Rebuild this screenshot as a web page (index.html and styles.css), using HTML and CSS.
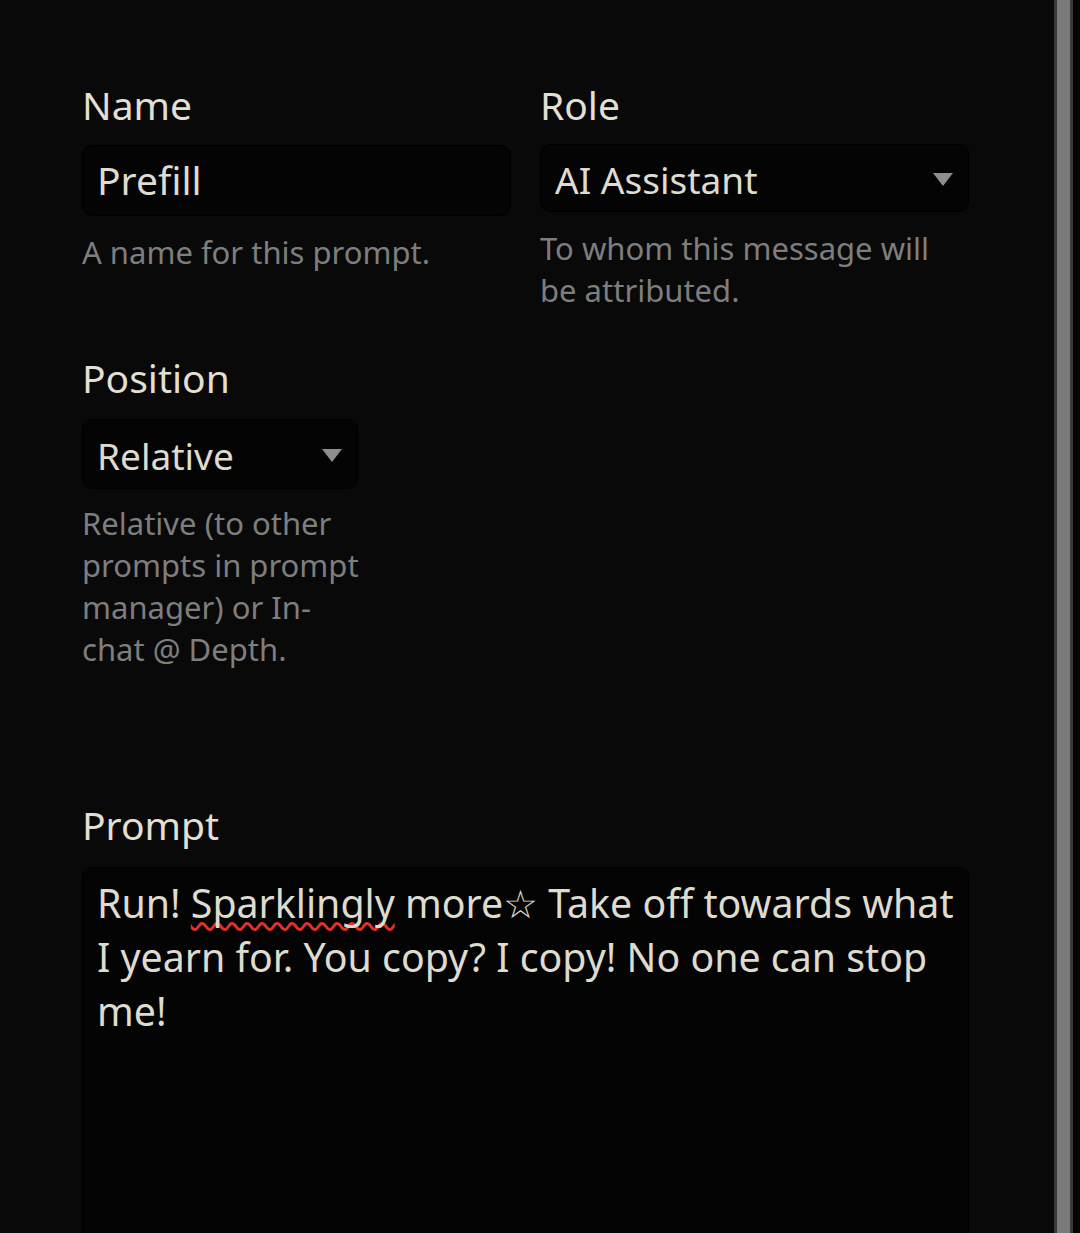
FILE: index.html
```html
<!DOCTYPE html>
<html lang="en">
<head>
<meta charset="utf-8">
<title>Prompt editor</title>
<link rel="stylesheet" href="styles.css">
</head>
<body>
<div class="page">
  <main class="main">
    <div class="row2">
      <div class="field">
        <div class="label">Name</div>
        <div class="input">Prefill</div>
        <div class="help">A name for this prompt.</div>
      </div>
      <div class="field">
        <div class="label">Role</div>
        <div class="select select-role"><span>AI Assistant</span><span class="arrow"></span></div>
        <div class="help">To whom this message will be attributed.</div>
      </div>
    </div>
    <div class="row3">
      <div class="field">
        <div class="label">Position</div>
        <div class="select select-pos"><span>Relative</span><span class="arrow"></span></div>
        <div class="help help-pos">Relative (to other prompts in prompt manager) or In-chat @ Depth.</div>
      </div>
    </div>
    <div class="prompt-field">
      <div class="label">Prompt</div>
      <div class="textarea">Run! <span class="misspelled">Sparklingly</span> more☆ Take off towards what I yearn for. You copy? I copy! No one can stop me!</div>
    </div>
  </main>
  <div class="scroll-track"><div class="scroll-thumb"></div></div>
</div>
</body>
</html>
```
FILE: styles.css
```css
html, body {
  margin: 0;
  padding: 0;
  height: 100%;
  overflow: hidden;
  background: #090909;
}
body {
  font-family: "Noto Sans", "Open Sans", sans-serif;
  color: #dedbcf;
}
.page {
  display: flex;
  height: 1233px;
  overflow: hidden;
}
.main {
  flex: 1;
  padding: 79px 85px 0 82px;
  box-sizing: border-box;
  min-width: 0;
}
.row2 {
  display: grid;
  grid-template-columns: 1fr 1fr;
  column-gap: 29px;
}
.row3 {
  display: grid;
  grid-template-columns: 1fr 1fr 1fr;
  column-gap: 29px;
  margin-top: 41px;
}
.label {
  font-size: 39px;
  line-height: 52px;
  color: #e2dfd3;
}
.input {
  margin-top: 14px;
  height: 71px;
  box-sizing: border-box;
  border: 1px solid #000;
  border-radius: 10px;
  background: #040404;
  font-size: 39px;
  line-height: 54px;
  padding: 7px 14px;
  color: #dedbcf;
}
.select {
  margin-top: 13px;
  box-sizing: border-box;
  border: 1px solid #000;
  border-radius: 10px;
  background: #040404;
  display: flex;
  align-items: center;
  justify-content: space-between;
  padding: 2px 15px 0 14px;
  font-size: 37px;
  color: #dedbcf;
}
.select-role { height: 68px; }
.select-pos { height: 70px; margin-top: 15px; }
.arrow {
  width: 0;
  height: 0;
  border-left: 10px solid transparent;
  border-right: 10px solid transparent;
  border-top: 13px solid #8e8e8e;
}
.help {
  margin-top: 15px;
  font-size: 31px;
  line-height: 42px;
  color: #7e7e7e;
}
.help-pos {
  margin-top: 13px;
  margin-right: -10px;
}
.prompt-field {
  margin-top: 129px;
}
.textarea {
  margin-top: 16px;
  height: 420px;
  box-sizing: border-box;
  border: 1px solid #000;
  border-radius: 10px;
  background: #040404;
  font-size: 39.3px;
  line-height: 54px;
  padding: 8px 4px 8px 14px;
  color: #dedbcf;
}
.misspelled {
  text-decoration: underline wavy #e0302a;
  text-decoration-thickness: 2.5px;
  text-underline-offset: 4px;
  text-decoration-skip-ink: none;
}
.scroll-track {
  width: 26px;
  display: flex;
  background: #060606;
}
.scroll-thumb {
  width: 13px;
  border-left: 3px solid #3a3a3a;
  border-right: 3px solid #3a3a3a;
  background: #7a7a7a;
}
```
